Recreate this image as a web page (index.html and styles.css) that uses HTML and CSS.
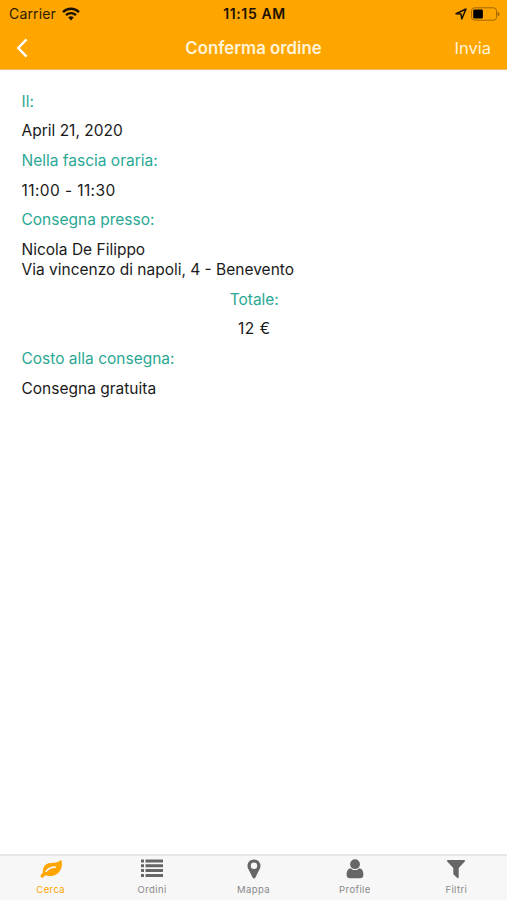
FILE: index.html
```html
<!DOCTYPE html>
<html lang="it">
<head>
    <meta charset="UTF-8">
    <meta name="viewport" content="width=device-width, initial-scale=1.0">
    <title>Conferma ordine</title>
    <link rel="stylesheet" href="styles.css">
</head>
<body>

    <header class="header">
        <div class="status-bar">
            <div class="carrier">
                <span>Carrier</span>
                <svg class="wifi" viewBox="0 0 18 14" fill="none" stroke="#1b1200" stroke-width="2.4">
                    <path d="M1 5.1a11.4 11.4 0 0 1 16 0"/>
                    <path d="M4 8.2a7.1 7.1 0 0 1 10 0"/>
                    <path d="M6.2 10.6a4 4 0 0 1 5.6 0L9 13.4z" fill="#1b1200" stroke="none"/>
                </svg>
            </div>
            <div class="time">11:15 AM</div>
            <div class="status-icons">
                <svg class="location" viewBox="0 0 12 12" fill="none" stroke="#1b1200" stroke-width="1.5" stroke-linejoin="round">
                    <path d="M1 5.7L11 1 6.8 11 6 6.1z"/>
                </svg>
                <svg class="battery" viewBox="0 0 30 14">
                    <rect x="0.6" y="0.6" width="25.8" height="12.8" rx="3" fill="none" stroke="#9c6500" stroke-width="1"/>
                    <rect x="2.3" y="2.3" width="10" height="9.4" rx="1.3" fill="#000"/>
                    <path d="M27.6 4.6q2 .7 2 2.4t-2 2.4z" fill="#9c6500"/>
                </svg>
            </div>
        </div>
        <nav class="nav-bar">
            <a class="back">
                <svg viewBox="0 0 12 20" fill="none" stroke="#fff" stroke-width="2.4">
                    <path d="M10.6 1.4L2.2 10l8.4 8.6"/>
                </svg>
            </a>
            <h1>Conferma ordine</h1>
            <a class="send">Invia</a>
        </nav>
    </header>

    <main class="content">
        <p class="label">Il:</p>
        <p class="value">April 21, 2020</p>
        <p class="label">Nella fascia oraria:</p>
        <p class="value hours">11:00 - 11:30</p>
        <p class="label">Consegna presso:</p>
        <p class="value">Nicola De Filippo<br>Via vincenzo di napoli, 4 - Benevento</p>
        <div class="total">
            <p class="label">Totale:</p>
            <p class="value">12 €</p>
        </div>
        <p class="label">Costo alla consegna:</p>
        <p class="value">Consegna gratuita</p>
    </main>

    <footer class="tab-bar">
        <div class="tab active">
            <svg viewBox="0 0 24 20">
                <path fill="currentColor" fill-rule="evenodd" d="M22.4 1.3c.8 2.8.8 6.200-.7 9.200-2 4.200-5.800 6.500-10 6.500-2.300 0-4.200-.8-5.200-.8-1 0-1.700 2.500-3.100 2.500-1.200 0-1.900-1-1.900-1.800 0-1.500 2.400-2.300 2.400-3.300C3.800 9 5.300 5.600 9.800 4.300c3.200-1 7.600-.2 10.200-1.900C20.800 1.900 21.300 1 21.900 1c.3 0 .4.100.5.3zM16.200 7.300c-4.300 0-7.700 1.900-10 4.900-.4.500.6 1.400 1.200.9 2.600-2.500 4.500-4.100 8.800-4.100 1.100 0 1.100-1.700 0-1.700z"/>
            </svg>
            <span>Cerca</span>
        </div>
        <div class="tab">
            <svg viewBox="0 0 24 20" fill="currentColor">
                <path d="M1 .5h3v3H1zM1 5.300h3v3H1zM1 10.100h3v3H1zM1 14.900h3v3H1z"/>
                <path d="M5.500 .5H23v3H5.500zM5.500 5.300H23v3H5.500zM5.500 10.100H23v3H5.500zM5.500 14.900H23v3H5.500z"/>
            </svg>
            <span>Ordini</span>
        </div>
        <div class="tab">
            <svg viewBox="0 0 24 20">
                <path fill="currentColor" fill-rule="evenodd" d="M12 .4c3.700 0 6.500 2.800 6.500 6.300 0 1.100-.2 2-.6 2.800l-4.500 9c-.5 1.200-2.300 1.200-2.800 0l-4.500-9c-.4-.8-.6-1.700-.6-2.800C5.500 3.200 8.300.4 12 .4zm0 3.200a3.200 3.200 0 1 0 0 6.400 3.200 3.200 0 0 0 0-6.400z"/>
            </svg>
            <span>Mappa</span>
        </div>
        <div class="tab">
            <svg viewBox="0 0 24 20" fill="currentColor">
                <circle cx="12" cy="5.200" r="4.900"/>
                <path d="M7.800 9.200c1.100 1.200 2.500 1.900 4.200 1.900s3.100-.7 4.200-1.900c3.100.2 4.200 3.300 4.200 6.500 0 2.300-1.300 3.600-3.400 3.600H7c-2.100 0-3.400-1.300-3.400-3.600 0-3.200 1.100-6.300 4.200-6.500z"/>
            </svg>
            <span>Profile</span>
        </div>
        <div class="tab">
            <svg viewBox="0 0 24 20" fill="currentColor">
                <path d="M3.800 1h16.400c.8 0 1.100.8.600 1.400L14.700 9v9.500c0 .7-.8 1-1.300.5l-3.600-3.300c-.3-.2-.5-.5-.5-.9V9L3.200 2.400C2.700 1.800 3 1 3.800 1z"/>
            </svg>
            <span>Filtri</span>
        </div>
    </footer>

</body>
</html>
```
FILE: styles.css
```css
* {
    box-sizing: border-box;
}
body {
    font-family: Inter, "Liberation Sans", sans-serif;
    margin: 0;
    height: 100vh;
    display: flex;
    flex-direction: column;
    background-color: #fff;
    color: #1a1a1a;
}
h1, p {
    margin: 0;
}
svg {
    display: block;
}
.header {
    height: 70px;
    background-color: #ffa500;
    border-bottom: 1px solid #f2ba55;
}
.status-bar {
    display: grid;
    grid-template-columns: 1fr auto 1fr;
    align-items: center;
    height: 27px;
    padding: 0 7px 0 9px;
    font-size: 14px;
    color: #2b1c00;
}
.carrier {
    display: flex;
    align-items: center;
    gap: 6px;
    letter-spacing: 0.15px;
}
.wifi {
    width: 18px;
    height: 14px;
}
.time {
    font-weight: 600;
    letter-spacing: 0.6px;
    color: #1b1200;
}
.status-icons {
    display: flex;
    align-items: center;
    justify-content: flex-end;
    gap: 4px;
}
.location {
    width: 12px;
    height: 12px;
}
.battery {
    width: 29px;
    height: 14px;
}
.nav-bar {
    display: grid;
    grid-template-columns: 1fr auto 1fr;
    align-items: center;
    height: 42px;
    padding: 0 16px;
    color: #fff4d9;
}
.nav-bar h1 {
    font-size: 16.8px;
    font-weight: 600;
}
.back svg {
    width: 12px;
    height: 20px;
}
.send {
    text-align: right;
    font-size: 16.5px;
}
.content {
    flex: 1;
    display: flex;
    flex-direction: column;
    gap: 10px;
    padding: 21.6px 20px 0 21.5px;
    font-size: 15.5px;
    line-height: 19.7px;
}
.label {
    color: #2aa893;
}
.hours {
    letter-spacing: 0.4px;
}
.total {
    display: flex;
    flex-direction: column;
    gap: 10px;
    text-align: center;
}
.total .value {
    letter-spacing: 0.5px;
}
.tab-bar {
    display: flex;
    height: 46px;
    background-color: #f7f7f7;
    border-top: 2px solid #e6e6e6;
}
.tab {
    flex: 1;
    display: flex;
    flex-direction: column;
    align-items: center;
    padding-top: 3px;
    color: #666;
}
.tab svg {
    width: 24px;
    height: 20px;
}
.tab span {
    margin-top: 5px;
    font-size: 9.5px;
    line-height: 12px;
    letter-spacing: 0.4px;
    color: #888;
}
.tab.active, .tab.active span {
    color: #ffa500;
}
```
